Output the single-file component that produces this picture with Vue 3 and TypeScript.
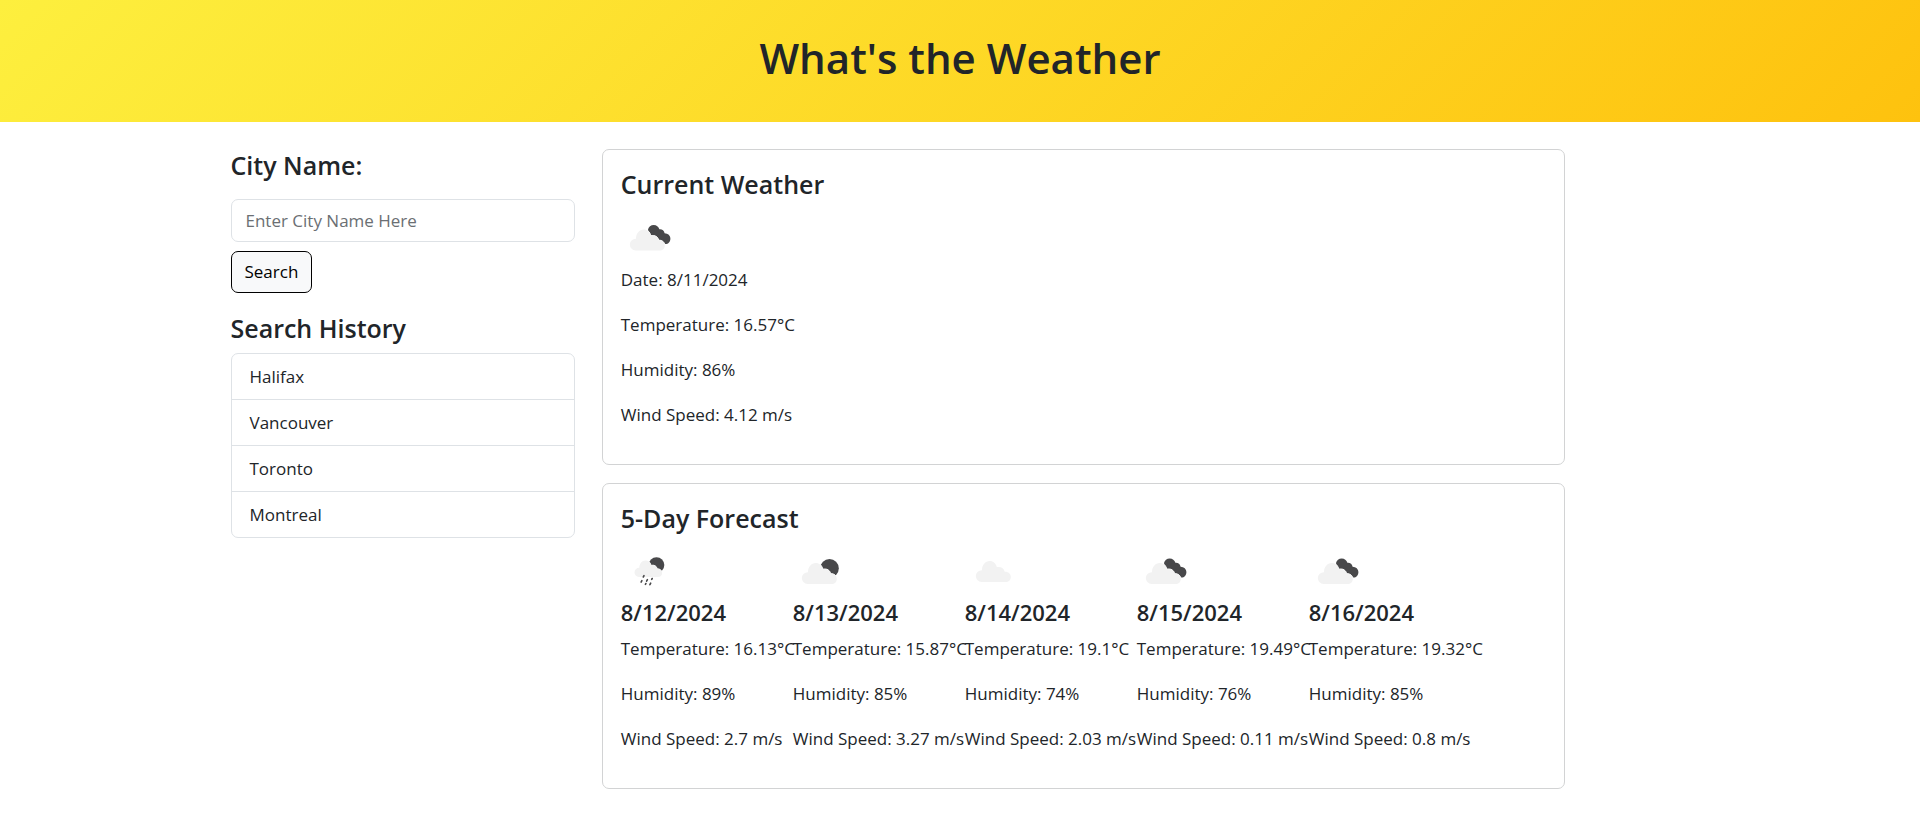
<script setup lang="ts">
import { ref } from 'vue'

type Sky = 'rain' | 'scattered' | 'cloud' | 'broken'

interface Forecast {
  date: string
  sky: Sky
  temperature: number
  humidity: number
  wind: number
}

const city = ref('')
const history = ref<string[]>(['Halifax', 'Vancouver', 'Toronto', 'Montreal'])

const current: Forecast = { date: '8/11/2024', sky: 'broken', temperature: 16.57, humidity: 86, wind: 4.12 }

const days: Forecast[] = [
  { date: '8/12/2024', sky: 'rain', temperature: 16.13, humidity: 89, wind: 2.7 },
  { date: '8/13/2024', sky: 'scattered', temperature: 15.87, humidity: 85, wind: 3.27 },
  { date: '8/14/2024', sky: 'cloud', temperature: 19.1, humidity: 74, wind: 2.03 },
  { date: '8/15/2024', sky: 'broken', temperature: 19.49, humidity: 76, wind: 0.11 },
  { date: '8/16/2024', sky: 'broken', temperature: 19.32, humidity: 85, wind: 0.8 },
]

function search() {
  const name = city.value.trim()
  if (name && !history.value.includes(name)) history.value.push(name)
  city.value = ''
}
</script>

<template>
  <svg class="defs" width="0" height="0" aria-hidden="true">
    <defs>
      <path
        id="cloud"
        d="M14.500 41a5.900 5.900 0 0 1 .5-11.800C15 24 18.300 20 22.700 20c3.600 0 6.300 2.400 7.100 6.200 4-.9 7.200 1 7.900 4.500 3.500-.2 6.100 2 6.100 5.200 0 3-2.200 5.100-5.300 5.100z"
      />
      <symbol id="sky-cloud" viewBox="0 0 56 56">
        <use href="#cloud" class="light" transform="translate(2 -2)" />
      </symbol>
      <symbol id="sky-scattered" viewBox="0 0 56 56">
        <circle class="dark" cx="36.500" cy="25.400" r="9.300" />
        <use href="#cloud" class="gap" />
        <use href="#cloud" class="light" />
      </symbol>
      <symbol id="sky-broken" viewBox="0 0 56 56">
        <path
          class="dark"
          d="M27 20c.6-2.800 2.900-4.600 5.700-4.600 2.800 0 4.900 1.600 5.700 4.300 2.600-.3 4.700 1.200 5.200 4.100 3.400.1 5.800 2.400 5.800 5.400 0 3-2.100 5.300-4.800 5.300-2.200 0-3.900-.9-5-3L29 28z"
        />
        <use href="#cloud" class="gap" />
        <use href="#cloud" class="light" />
      </symbol>
      <symbol id="sky-rain" viewBox="0 0 56 56">
        <circle class="dark" cx="35.500" cy="22" r="7.800" />
        <g transform="translate(6.500 1.600) scale(.79)">
          <use href="#cloud" class="gap" />
          <use href="#cloud" class="light" />
        </g>
        <path
          class="drops"
          d="M23 32.700l-.7 1.300M20.900 37.600l-.8 1.500M26.400 36.700l-.8 1.500M31.200 35.500l-.5.900M24.900 40.500l-.5.900M29.700 40.200l-.8 1.500"
        />
      </symbol>
    </defs>
  </svg>

  <header class="banner">
    <h1>What's the Weather</h1>
  </header>

  <main class="container">
    <aside class="side">
      <form class="search" @submit.prevent="search">
        <label class="title" for="city">City Name:</label>
        <input id="city" v-model="city" type="text" placeholder="Enter City Name Here" />
        <button type="submit">Search</button>
      </form>
      <h4 class="title">Search History</h4>
      <ul class="history">
        <li v-for="name in history" :key="name">{{ name }}</li>
      </ul>
    </aside>

    <div class="panels">
      <section class="card">
        <h4 class="title">Current Weather</h4>
        <svg class="icon" aria-hidden="true"><use :href="`#sky-${current.sky}`" /></svg>
        <p>Date: {{ current.date }}</p>
        <p>Temperature: {{ current.temperature }}°C</p>
        <p>Humidity: {{ current.humidity }}%</p>
        <p>Wind Speed: {{ current.wind }} m/s</p>
      </section>

      <section class="card">
        <h4 class="title">5-Day Forecast</h4>
        <div class="days">
          <article v-for="day in days" :key="day.date">
            <svg class="icon" aria-hidden="true"><use :href="`#sky-${day.sky}`" /></svg>
            <h5>{{ day.date }}</h5>
            <p>Temperature: {{ day.temperature }}°C</p>
            <p>Humidity: {{ day.humidity }}%</p>
            <p>Wind Speed: {{ day.wind }} m/s</p>
          </article>
        </div>
      </section>
    </div>
  </main>
</template>

<style>
body {
  margin: 0;
  background: #fff;
  color: #212529;
  font: 17px/27px "Segoe UI", "Open Sans", "Noto Sans", sans-serif;
}
</style>

<style scoped>
* {
  box-sizing: border-box;
}

.defs {
  position: absolute;
}

.light {
  fill: #f2f2f2;
}

.dark {
  fill: #48484a;
}

.gap {
  fill: #fff;
  stroke: #fff;
  stroke-width: 1;
}

.drops {
  fill: none;
  stroke: #48484a;
  stroke-width: 1.6;
  stroke-linecap: round;
}

.banner {
  padding: 31px 27px 37px;
  background: linear-gradient(135deg, #fdef3e, #fec20e);
  text-align: center;
}

h1 {
  margin: 0;
  font-size: 42px;
  font-weight: 600;
  line-height: 54px;
}

.container {
  display: grid;
  grid-template-columns: 3fr 8fr 1fr;
  max-width: 1485px;
  margin: 27px auto 0;
}

.side,
.panels {
  padding: 0 14px 0 13px;
}

.panels {
  display: flex;
  flex-direction: column;
  gap: 18px;
}

.title {
  display: block;
  margin: 0 0 9px;
  font-size: 25px;
  font-weight: 600;
  line-height: 32px;
}

.search {
  display: flex;
  flex-direction: column;
  align-items: flex-start;
  gap: 9px;
  margin-bottom: 19px;
}

input {
  width: 100%;
  padding: 7px 14px;
  border: 1px solid #dee2e6;
  border-radius: 7px;
  background: #fff;
  color: #212529;
  font: inherit;
}

input::placeholder {
  color: #6b6f73;
  opacity: 1;
}

button {
  padding: 7px 13px;
  border: 1px solid #000;
  border-radius: 7px;
  background: #f8f9fa;
  color: #000;
  font: inherit;
  line-height: 26px;
  cursor: pointer;
}

.history {
  margin: 0;
  padding: 0;
  border: 1px solid #dee2e6;
  border-radius: 7px;
  list-style: none;
}

.history li {
  padding: 9px 18px;
}

.history li + li {
  border-top: 1px solid #dee2e6;
}

.card {
  padding: 18px;
  border: 1px solid #d2d3d4;
  border-radius: 7px;
}

.icon {
  display: block;
  width: 56px;
  height: 57px;
}

.card p {
  margin: 0 0 18px;
  white-space: nowrap;
}

.days {
  display: grid;
  grid-template-columns: repeat(5, 172px);
}

.days .icon {
  height: 56px;
}

h5 {
  margin: 0 0 9px;
  font-size: 22px;
  font-weight: 600;
  line-height: 27px;
}
</style>
